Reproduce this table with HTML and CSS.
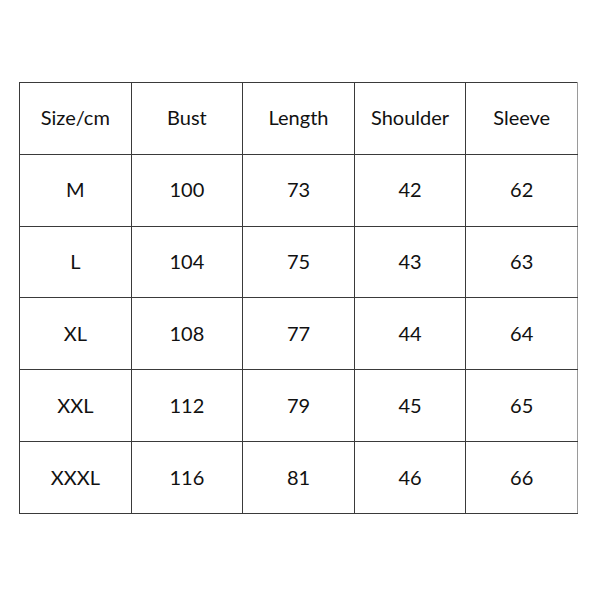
FILE: index.html
```html
<!DOCTYPE html>
<html>
<head>
<meta charset="utf-8">
<link rel="stylesheet" href="styles.css">
</head>
<body>
<div class="page">
<table class="size-table">
<tr><td>Size/cm</td><td>Bust</td><td>Length</td><td>Shoulder</td><td>Sleeve</td></tr>
<tr><td>M</td><td>100</td><td>73</td><td>42</td><td>62</td></tr>
<tr><td>L</td><td>104</td><td>75</td><td>43</td><td>63</td></tr>
<tr><td>XL</td><td>108</td><td>77</td><td>44</td><td>64</td></tr>
<tr><td>XXL</td><td>112</td><td>79</td><td>45</td><td>65</td></tr>
<tr><td>XXXL</td><td>116</td><td>81</td><td>46</td><td>66</td></tr>
</table>
</div>
</body>
</html>
```
FILE: styles.css
```css
html, body {
  margin: 0;
  padding: 0;
  background: #fff;
}
.page {
  width: 600px;
  height: 600px;
  padding: 82px 0 0 19px;
  box-sizing: border-box;
}
.size-table {
  border-collapse: collapse;
  width: 559px;
  height: 432px;
  table-layout: fixed;
  font-family: Lato, "Open Sans", sans-serif;
  font-size: 20px;
  color: #111;
}
.size-table td {
  border: 1px solid #3a3a3a;
  text-align: center;
  vertical-align: middle;
  padding: 0 0 2px 0;
}
.size-table td:last-child {
  border-right-color: #9a9a9a;
}
```
